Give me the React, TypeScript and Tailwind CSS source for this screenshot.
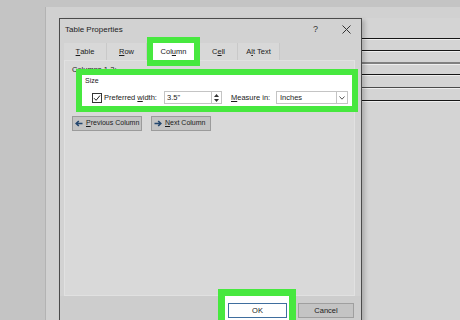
import React from 'react';

// underlined access key
const K = ({ children }: { children: React.ReactNode }) => (
  <span className="underline underline-offset-1">{children}</span>
);

const docLines = [
  { mt: 'mt-[20px]', line: 'h-[1px] bg-[#151515]' },
  { mt: 'mt-[10px]', line: 'h-[1px] bg-[#151515]' },
  { mt: 'mt-[10px]', line: 'h-[2px] bg-[#808080]' },
  { mt: 'mt-[9px]', line: 'h-[1px] bg-[#151515]' },
  { mt: 'mt-[11px]', line: 'h-[1px] bg-[#4a4a4a]' },
  { mt: 'mt-[11px]', line: 'h-[1px] bg-[#151515]' },
];

function Tab({ w, children }: { w: string; children: React.ReactNode }) {
  return (
    <div className={`${w} flex items-center justify-center bg-[#d8d8d8] border-r border-[#c9c9c9]`}>
      {children}
    </div>
  );
}

function ArrowLeft() {
  return (
    <svg width="8" height="7" viewBox="0 0 8 7" className="shrink-0">
      <path d="M7.5 3.5H1.5M3.8 1L1.2 3.5L3.8 6" stroke="#23466e" strokeWidth="1.6" fill="none" />
    </svg>
  );
}

function ArrowRight() {
  return (
    <svg width="8" height="7" viewBox="0 0 8 7" className="shrink-0">
      <path d="M0.5 3.5H6.5M4.2 1L6.8 3.5L4.2 6" stroke="#23466e" strokeWidth="1.6" fill="none" />
    </svg>
  );
}

function Dialog() {
  return (
    <div className="w-[303px] h-[310px] shrink-0 flex flex-col bg-[#d2d2d2] border border-[#4b4b4b] shadow-[3px_2px_4px_rgba(0,0,0,0.18)] relative z-10">
      {/* title bar */}
      <div className="h-[21px] flex items-center pl-[5px] pr-[10px]">
        <span className="text-[8px] text-[#222]">Table Properties</span>
        <span className="ml-auto text-[9px] text-[#333]">?</span>
        <svg width="9" height="9" viewBox="0 0 9 9" className="ml-[24px]">
          <path d="M0.5 0.5L8.5 8.5M8.5 0.5L0.5 8.5" stroke="#333" strokeWidth="1" />
        </svg>
      </div>

      {/* tabs */}
      <div className="mt-[3px] h-[17px] flex pl-[4px] text-[7.5px] relative z-20">
        <Tab w="w-[43px]"><K>T</K>able</Tab>
        <Tab w="w-[40px]"><K>R</K>ow</Tab>
        <div className="mx-[6px] w-[41px] flex items-center justify-center bg-white outline-[6px] outline-solid outline-[#47e83f]">
          Col<K>u</K>mn
        </div>
        <Tab w="w-[38px]">C<K>e</K>ll</Tab>
        <Tab w="w-[42px]">A<K>l</K>t Text</Tab>
      </div>

      {/* tab panel */}
      <div className="ml-[4px] mr-[6px] h-[236px] shrink-0 bg-[#d9d9d9] border border-[#e1e1e1] flex flex-col text-[7.5px]">
        <div className="pl-[7px] mt-[4px] h-[10px] leading-[10px]">Columns 1-2:</div>

        <div className="ml-[17px] mr-[2px] h-[31px] bg-white outline-[6px] outline-solid outline-[#47e83f] flex flex-col relative z-20">
          <div className="pl-[3px] pt-[1px] h-[10px] leading-[9px] text-[7px]">Size</div>
          <div className="mt-[6px] h-[13px] flex items-center pl-[10px] whitespace-nowrap">
            <div className="w-[10px] h-[10px] border border-[#333] bg-white flex items-center justify-center">
              <svg width="8" height="8" viewBox="0 0 8 8">
                <path d="M1 4.2L3.1 6.3L7 1.5" stroke="#222" strokeWidth="1" fill="none" />
              </svg>
            </div>
            <span className="ml-[2px] w-[60px]">Preferred <K>w</K>idth:</span>
            <div className="w-[48px] h-[13px] border border-[#c4c4c4] flex items-center pl-[2px]">3.5"</div>
            <div className="w-[10px] h-[13px] border border-l-0 border-[#c4c4c4] flex flex-col items-center justify-center gap-[2px]">
              <svg width="5" height="3" viewBox="0 0 5 3"><path d="M0 3L2.5 0L5 3Z" fill="#333" /></svg>
              <svg width="5" height="3" viewBox="0 0 5 3"><path d="M0 0L2.5 3L5 0Z" fill="#333" /></svg>
            </div>
            <span className="ml-[9px] w-[45px]"><K>M</K>easure in:</span>
            <div className="w-[72px] h-[13px] border border-[#c4c4c4] flex items-center">
              <span className="pl-[3px] flex-1">Inches</span>
              <div className="w-[11px] h-full border-l border-[#c4c4c4] flex items-center justify-center">
                <svg width="6" height="4" viewBox="0 0 6 4"><path d="M0.5 0.5L3 3.2L5.5 0.5" stroke="#444" strokeWidth="0.9" fill="none" /></svg>
              </div>
            </div>
          </div>
        </div>

        <div className="mt-[10px] flex gap-[9px] pl-[7px] whitespace-nowrap text-[7px]">
          <div className="w-[70px] h-[15px] bg-[#c3c3c3] border border-[#9b9b9b] flex items-center pl-[2px] gap-[3px]">
            <ArrowLeft />
            <span><K>P</K>revious Column</span>
          </div>
          <div className="w-[60px] h-[15px] bg-[#c3c3c3] border border-[#9b9b9b] flex items-center pl-[2px] gap-[3px]">
            <ArrowRight />
            <span><K>N</K>ext Column</span>
          </div>
        </div>
      </div>

      {/* footer */}
      <div className="flex justify-end pr-[7px] text-[7.5px] bg-[#cdcdcd] flex-1">
        <div className="w-[64px] h-[30px] bg-white outline-[7px] outline-solid outline-[#47e83f] pt-[7px] px-[3px] relative z-20">
          <div className="w-[59px] h-[15px] border border-[#3f6e9e] bg-white flex items-center justify-center">OK</div>
        </div>
        <div className="ml-[9px] mt-[7px] w-[56px] h-[15px] bg-[#c4c4c4] border border-[#9f9f9f] flex items-center justify-center">
          Cancel
        </div>
      </div>
    </div>
  );
}

export default function App() {
  return (
    <div className="w-[460px] h-[320px] overflow-hidden bg-[#c4c4c4] pt-[7px] pl-[45px] flex font-['Liberation_Sans',Arial,sans-serif] text-[#1b1b1b]">
      <div className="flex-1 flex bg-[#d1d1d1] border-l border-[#b3b3b3] pl-[13px] pt-[11px]">
        <Dialog />
        <div className="flex-1 flex flex-col bg-[#d4d4d4]">
          {docLines.map((l, i) => (
            <div key={i} className={l.mt}>
              <div className={l.line} />
              <div className="h-[1px] bg-[#eeeeee]" />
            </div>
          ))}
        </div>
      </div>
    </div>
  );
}
